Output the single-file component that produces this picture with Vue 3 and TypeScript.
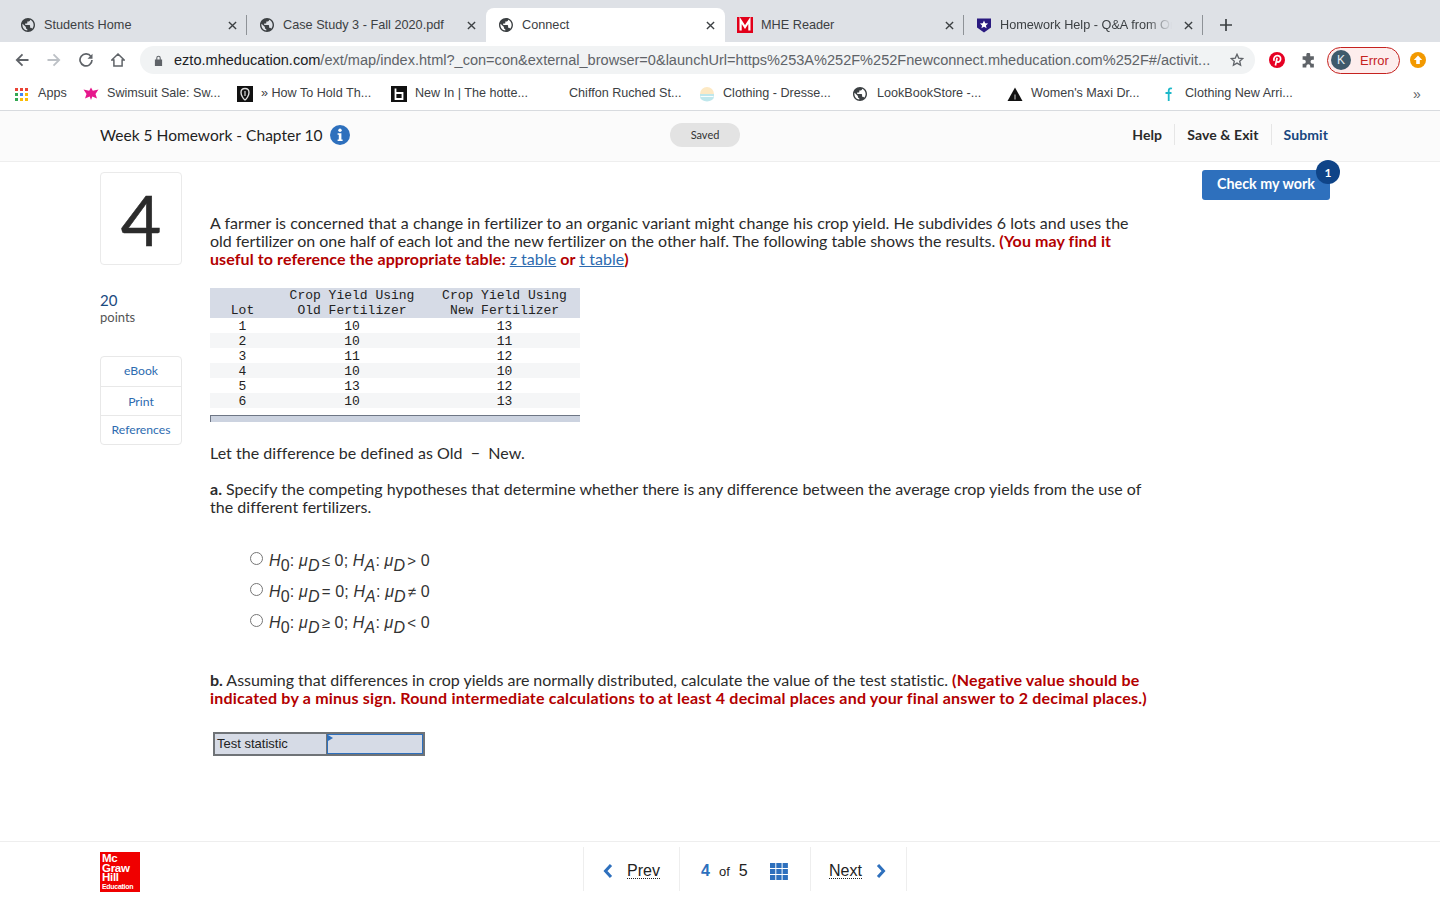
<template>
  <div class="page">
    <div class="tabstrip">
      <div v-for="tab in tabs" :key="tab.title" class="tab" :class="{ active: tab.active, nodiv: tab.nodiv }">
        <svg v-if="tab.icon === 'globe'" class="favicon" viewBox="2 2 20 20"><path fill="#3c4043" :d="globePath" /></svg>
        <svg v-else-if="tab.icon === 'mhe'" class="favicon wide" viewBox="0 0 16 16">
          <rect width="16" height="16" fill="#e2001a" />
          <path fill="none" stroke="#fff" stroke-width="2.2" d="M3.6 13.5V3.4L8 10l4.4-6.6v10.1" />
        </svg>
        <svg v-else class="favicon wide" viewBox="0 0 16 16">
          <path fill="#2a1a80" d="M1 1.5h14v9L8 15.5 1 10.500z" />
          <path fill="#fff" d="M8 3.500l1.200 2.700 2.900.3-2.200 1.900.7 2.900L8 9.800l-2.600 1.500.7-2.900-2.200-1.900 2.900-.3z" />
        </svg>
        <span class="tab-title" :class="{ fade: tab.fade }">{{ tab.title }}</span>
        <span class="tab-close">
          <svg viewBox="0 0 10 10"><path d="M1 1l8 8M9 1l-8 8" stroke="#3c4043" stroke-width="1.500" fill="none" /></svg>
        </span>
      </div>
      <div class="newtab">
        <svg viewBox="0 0 12 12"><path d="M6 0v12M0 6h12" stroke="#3c4043" stroke-width="1.700" fill="none" /></svg>
      </div>
    </div>

    <div class="toolbar">
      <div class="nav-icons">
        <svg viewBox="0 0 14 14"><path d="M13.500 7H2M7.500 1.300L1.800 7l5.700 5.700" stroke="#5f6368" stroke-width="1.800" fill="none" /></svg>
        <svg viewBox="0 0 14 14"><path d="M.5 7H12M6.500 1.300L12.200 7l-5.700 5.700" stroke="#bdc1c6" stroke-width="1.800" fill="none" /></svg>
        <svg viewBox="0 0 14 14"><path d="M12 3.600A6 6 0 1 0 13 7" stroke="#5f6368" stroke-width="1.700" fill="none" /><path d="M13.500 0.800v5h-5z" fill="#5f6368" /></svg>
        <svg viewBox="0 0 14 14"><path d="M7 1L.8 7h2.100v6h8.200V7h2.100z" stroke="#5f6368" stroke-width="1.500" fill="none" stroke-linejoin="miter" /></svg>
      </div>
      <div class="omnibox">
        <svg class="lock" viewBox="0 0 10 12"><path fill="#5f6368" d="M1 5h8v7H1zM2.500 5V3.200a2.500 2.500 0 0 1 5 0V5H6.300V3.200a1.300 1.300 0 0 0-2.600 0V5z" /></svg>
        <span class="url"><span class="host">ezto.mheducation.com</span>/ext/map/index.html?_con=con&amp;external_browser=0&amp;launchUrl=https%253A%252F%252Fnewconnect.mheducation.com%252F#/activit...</span>
        <svg class="star" viewBox="0 0 14 14"><path d="M7 1.300l1.700 3.800 4.100.4-3.100 2.700.9 4L7 10.100l-3.600 2.100.9-4-3.100-2.700 4.100-.4z" fill="none" stroke="#5f6368" stroke-width="1.300" /></svg>
      </div>
      <svg class="pin" viewBox="0 0 16 16">
        <circle cx="8" cy="8" r="8" fill="#e60023" />
        <path fill="none" stroke="#fff" stroke-width="1.700" d="M5.200 8.800C4 6 6 3.700 8.300 3.700c2.200 0 3.500 1.500 3.300 3.400-.2 2-1.500 3.200-2.800 3-.9-.1-1.300-.8-1.200-1.400M8.100 5.800L6.400 13.500" />
      </svg>
      <svg class="puzzle" viewBox="0 0 14 14"><path fill="#5f6368" d="M5 1.500a1.800 1.800 0 0 1 3.600 0V3H12v3.400h-1.300a1.800 1.800 0 0 0 0 3.600H12v3.500H8.600v-1.300a1.800 1.800 0 0 0-3.600 0v1.300H1.500V10h1.200a1.800 1.800 0 0 0 0-3.600H1.500V3H5z" /></svg>
      <div class="profile">
        <span class="avatar">K</span>
        <span class="profile-text">Error</span>
      </div>
      <svg class="update" viewBox="0 0 16 16">
        <circle cx="8" cy="8" r="8" fill="#f29900" />
        <path fill="#fff" d="M8 3.500L12.200 8H9.800v4H6.200V8H3.800z" />
      </svg>
    </div>

    <div class="bookmarks">
      <div class="apps">
        <svg viewBox="0 0 13 13">
          <template v-for="(c, i) in appDots" :key="i">
            <rect :x="(i % 3) * 5" :y="Math.floor(i / 3) * 5" width="3" height="3" :fill="c" />
          </template>
        </svg>
        <span class="bm-title">Apps</span>
      </div>
      <div v-for="b in bookmarks" :key="b.title" class="bookmark">
        <span class="bm-icon">
          <svg v-if="b.icon === 'flower'" viewBox="0 0 16 16"><path fill="#e6178c" d="M8 1.500l1.800 3.300L15.500 3.500l-3 4.400L14 12.500 9.300 10.500 8 14 6.700 10.500 2 12.500l1.500-4.600-3-4.400 5.700 1.300z" /></svg>
          <svg v-else-if="b.icon === 'shield'" viewBox="0 0 16 16"><rect width="16" height="16" fill="#111" /><path d="M8 2.500c3 0 4 2 4 4 0 3-2.500 6.500-4 7.500-1.500-1-4-4.500-4-7.500 0-2 1-4 4-4z" fill="none" stroke="#ddd" stroke-width="1.400" /><path d="M8 5v5" stroke="#ddd" stroke-width="1.200" /></svg>
          <svg v-else-if="b.icon === 'b'" viewBox="0 0 16 16"><rect width="16" height="16" fill="#111" /><path d="M4.500 2.500v10.500h7V7h-7" fill="none" stroke="#fff" stroke-width="1.800" /></svg>
          <svg v-else-if="b.icon === 'sun'" viewBox="0 0 16 16"><circle cx="8" cy="8" r="7" fill="#fde9c4" /><path d="M1 8h14v2.500a7 5 0 0 1-14 0z" fill="#bfe7ec" /><path d="M1.500 10.500h13" stroke="#fff" stroke-width=".9" /></svg>
          <svg v-else-if="b.icon === 'globe'" viewBox="2 2 20 20" class="small-globe"><path fill="#3c4043" :d="globePath" /></svg>
          <svg v-else-if="b.icon === 'tri'" viewBox="0 0 16 16"><path fill="#111" d="M8 1.500l7.500 13.500H.5z" /><path fill="#888" d="M7.200 8.500h1.600v5H7.200z" /></svg>
          <svg v-else-if="b.icon === 'f'" viewBox="0 0 16 16"><path d="M11 2.500C8.500 1.800 7.700 3 7.700 5v10M4.500 7h6" fill="none" stroke="#1cb8c9" stroke-width="1.800" /></svg>
        </span>
        <span class="bm-title">{{ b.title }}</span>
      </div>
      <span class="more">»</span>
    </div>

    <header class="hw-header">
      <div class="hw-title">
        <span>Week 5 Homework - Chapter 10</span>
        <svg class="info" viewBox="0 0 20 20">
          <circle cx="10" cy="10" r="10" fill="#2e70bd" />
          <circle cx="10" cy="5.200" r="1.700" fill="#fff" />
          <path fill="#fff" d="M7.600 8.200h3.800v6.400h1.200v1.500H7.600v-1.500h1.200V9.700H7.600z" />
        </svg>
      </div>
      <span class="saved">Saved</span>
      <nav class="hw-links">
        <a>Help</a>
        <a>Save &amp; Exit</a>
        <a class="submit">Submit</a>
      </nav>
    </header>

    <main class="hw-main">
      <aside class="side">
        <div class="qnum">4</div>
        <div class="points"><b>20</b><span>points</span></div>
        <div class="side-btns">
          <a>eBook</a>
          <a>Print</a>
          <a>References</a>
        </div>
      </aside>

      <section class="question">
        <p class="intro">
          A farmer is concerned that a change in fertilizer to an organic variant might change his crop yield. He subdivides 6 lots and uses the
          <span class="tight">old fertilizer on one half of each lot and the new fertilizer on the other half. The following table shows the results.</span> <strong class="red">(You may find it<br />useful to reference the appropriate table: <a class="link">z table</a> or <a class="link">t table</a>)</strong>
        </p>

        <table class="data">
          <colgroup>
            <col class="c1" />
            <col class="c2" />
            <col class="c3" />
          </colgroup>
          <thead>
            <tr>
              <th>Lot</th>
              <th>Crop Yield Using<br />Old Fertilizer</th>
              <th>Crop Yield Using<br />New Fertilizer</th>
            </tr>
          </thead>
          <tbody>
            <tr v-for="r in rows" :key="r[0]">
              <td v-for="(v, i) in r" :key="i">{{ v }}</td>
            </tr>
          </tbody>
        </table>
        <div class="table-foot"></div>

        <p class="diff">Let the difference be defined as Old &nbsp;&minus;&nbsp; New.</p>

        <p class="part-a"><b>a.</b> Specify the competing hypotheses that determine whether there is any difference between the average crop yields from the use of the different fertilizers.</p>

        <div class="options">
          <label v-for="o in options" :key="o.a" class="option">
            <input type="radio" name="hyp" />
            <span class="math">
              <i>H</i><sub>0</sub>: <i class="mu">μ</i><sub><i>D</i></sub><small>{{ o.a }}</small> 0; <i>H</i><sub><i>A</i></sub>: <i class="mu">μ</i><sub><i>D</i></sub><small>{{ o.b }}</small> 0
            </span>
          </label>
        </div>

        <p class="part-b"><b>b.</b> Assuming that differences in crop yields are normally distributed, calculate the value of the test statistic. <strong class="red">(Negative value should be indicated by a minus sign. Round intermediate calculations to at least 4 decimal places and your final answer to 2 decimal places.)</strong></p>

        <div class="stat">
          <div class="stat-label">Test statistic</div>
          <div class="stat-input"><span class="corner"></span></div>
        </div>
      </section>

      <div class="check-col">
        <button class="check">Check my work<span class="badge">1</span></button>
      </div>
    </main>

    <footer class="hw-footer">
      <div class="logo"><span>Mc</span><span>Graw</span><span>Hill</span><em>Education</em></div>
      <div class="pager">
        <div class="pg prev">
          <svg class="chev" viewBox="0 0 10 16"><path d="M8 2L2.500 8 8 14" fill="none" stroke="#2e70bd" stroke-width="3" /></svg>
          <span class="pg-link">Prev</span>
        </div>
        <div class="pg count">
          <b>4</b><span class="of">of</span><span class="total">5</span>
          <svg class="grid-ic" viewBox="0 0 18 17">
            <template v-for="n in 9" :key="n">
              <rect :x="((n - 1) % 3) * 6.300" :y="Math.floor((n - 1) / 3) * 6" width="5.300" height="5" fill="#2e70bd" />
            </template>
          </svg>
        </div>
        <div class="pg next">
          <span class="pg-link">Next</span>
          <svg class="chev" viewBox="0 0 10 16"><path d="M2 2l5.500 6L2 14" fill="none" stroke="#2e70bd" stroke-width="3" /></svg>
        </div>
      </div>
    </footer>
  </div>
</template>

<script setup lang="ts">
interface Tab {
  title: string;
  icon: 'globe' | 'mhe' | 'hw';
  active?: boolean;
  nodiv?: boolean;
  fade?: boolean;
}

const globePath =
  'M12 2C6.480 2 2 6.480 2 12s4.480 10 10 10 10-4.480 10-10S17.520 2 12 2zm-1 17.930c-3.950-.490-7-3.850-7-7.930 0-.620.080-1.210.210-1.790L9 15v1c0 1.100.900 2 2 2v1.930zm6.900-2.540c-.260-.810-1-1.390-1.900-1.390h-1v-3c0-.550-.450-1-1-1H8v-2h2c.550 0 1-.450 1-1V7h2c1.100 0 2-.900 2-2v-.410c2.930 1.190 5 4.060 5 7.410 0 2.080-.800 3.970-2.100 5.390z';

const tabs: Tab[] = [
  { title: 'Students Home', icon: 'globe' },
  { title: 'Case Study 3 - Fall 2020.pdf', icon: 'globe', nodiv: true },
  { title: 'Connect', icon: 'globe', active: true, nodiv: true },
  { title: 'MHE Reader', icon: 'mhe' },
  { title: 'Homework Help - Q&A from Online Tutors', icon: 'hw', fade: true },
];

const appDots = ['#ea4335', '#ea4335', '#ea4335', '#34a853', '#4285f4', '#fbbc05', '#34a853', '#fbbc05', '#fbbc05'];

const bookmarks = [
  { title: 'Swimsuit Sale: Sw...', icon: 'flower' },
  { title: '» How To Hold Th...', icon: 'shield' },
  { title: 'New In | The hotte...', icon: 'b' },
  { title: 'Chiffon Ruched St...', icon: 'none' },
  { title: 'Clothing - Dresse...', icon: 'sun' },
  { title: 'LookBookStore -...', icon: 'globe' },
  { title: "Women's Maxi Dr...", icon: 'tri' },
  { title: 'Clothing New Arri...', icon: 'f' },
];

const rows = [
  ['1', '10', '13'],
  ['2', '10', '11'],
  ['3', '11', '12'],
  ['4', '10', '10'],
  ['5', '13', '12'],
  ['6', '10', '13'],
];

const options = [
  { a: '≤', b: '>' },
  { a: '=', b: '≠' },
  { a: '≥', b: '<' },
];
</script>

<style>
html,
body {
  margin: 0;
  background: #fff;
}
</style>

<style scoped>
.page {
  width: 1440px;
  height: 900px;
  overflow: hidden;
  display: flex;
  flex-direction: column;
  font-family: Lato, "Open Sans", sans-serif;
  color: #222;
}

/* browser chrome */
.tabstrip {
  height: 42px;
  flex: none;
  display: flex;
  padding: 8px 0 0 8px;
  box-sizing: border-box;
  background: #dee1e6;
  font: 12.700px "Liberation Sans", Arial, sans-serif;
  color: #3c4043;
}
.tab {
  width: 239px;
  height: 34px;
  flex: none;
  display: flex;
  align-items: center;
  box-sizing: border-box;
  padding: 0 8.500px 0 13px;
  position: relative;
}
.tab::after {
  content: '';
  position: absolute;
  right: 0;
  top: 7px;
  width: 1px;
  height: 20px;
  background: #8e9297;
}
.tab.nodiv::after {
  display: none;
}
.tab.active {
  background: #fff;
  border-radius: 8px 8px 0 0;
}
.favicon {
  width: 14px;
  height: 14px;
  flex: none;
  margin-right: 9px;
}
.favicon.wide {
  width: 16px;
  height: 16px;
  margin: 0 8px 0 -1px;
}
.tab-title {
  flex: 1;
  min-width: 0;
  white-space: nowrap;
  overflow: hidden;
}
.tab-title.fade {
  -webkit-mask-image: linear-gradient(to right, #000 85%, transparent);
  mask-image: linear-gradient(to right, #000 85%, transparent);
}
.tab-close {
  width: 9px;
  height: 9px;
  margin: 0 2px 0 12px;
  flex: none;
  display: flex;
}
.newtab {
  width: 12px;
  height: 12px;
  margin: 11px 0 0 17px;
  display: flex;
}

.toolbar {
  height: 36px;
  flex: none;
  display: flex;
  align-items: center;
  padding: 0 14px 0 15px;
  background: #fff;
}
.nav-icons {
  display: flex;
  gap: 18px;
  width: 125px;
  flex: none;
}
.nav-icons svg {
  width: 14px;
  height: 14px;
  flex: none;
}
.omnibox {
  width: 1115px;
  height: 28px;
  flex: none;
  display: flex;
  align-items: center;
  box-sizing: border-box;
  padding: 0 11px 0 14px;
  border-radius: 14px;
  background: #f1f3f4;
  font: 14.560px "Liberation Sans", Arial, sans-serif;
  color: #5f6368;
}
.lock {
  width: 9px;
  height: 11px;
  flex: none;
  margin-right: 11px;
}
.url {
  flex: 1;
  white-space: nowrap;
  overflow: hidden;
}
.host {
  color: #202124;
}
.star {
  width: 14px;
  height: 14px;
  flex: none;
}
.pin {
  width: 16px;
  height: 16px;
  margin-left: 14px;
  flex: none;
}
.puzzle {
  width: 15px;
  height: 15px;
  margin-left: 16px;
  flex: none;
}
.profile {
  width: 73px;
  height: 27px;
  margin-left: 11px;
  flex: none;
  display: flex;
  align-items: center;
  box-sizing: border-box;
  padding-left: 3px;
  border: 1px solid #c5221f;
  border-radius: 14px;
  background: #fdeded;
  font: 13px "Liberation Sans", Arial, sans-serif;
  color: #c5221f;
}
.avatar {
  width: 20px;
  height: 20px;
  border-radius: 50%;
  background: #3f5a6b;
  color: #e8eef2;
  font-size: 12px;
  display: flex;
  align-items: center;
  justify-content: center;
}
.profile-text {
  margin-left: 9px;
}
.update {
  width: 16px;
  height: 16px;
  margin-left: 10px;
  flex: none;
}

.bookmarks {
  height: 33px;
  flex: none;
  display: flex;
  align-items: center;
  box-sizing: border-box;
  padding: 0 15px;
  border-bottom: 1px solid #d8dbdf;
  background: #fff;
  font: 12.600px "Liberation Sans", Arial, sans-serif;
  color: #3c4043;
}
.apps {
  width: 68px;
  flex: none;
  display: flex;
  align-items: center;
  gap: 10px;
}
.apps svg {
  width: 13px;
  height: 13px;
}
.bookmark {
  width: 154px;
  flex: none;
  display: flex;
  align-items: center;
  gap: 8px;
  white-space: nowrap;
}
.bm-title {
  margin-bottom: 2px;
}
.bm-icon {
  width: 16px;
  height: 16px;
  flex: none;
  display: flex;
}
.bm-icon svg {
  width: 16px;
  height: 16px;
}
.bm-icon svg.small-globe {
  width: 14px;
  height: 14px;
  margin-top: 1px;
}
.more {
  margin-left: 98px;
  font-size: 14px;
  color: #5f6368;
}

/* homework header */
.hw-header {
  height: 51px;
  flex: none;
  display: flex;
  align-items: center;
  box-sizing: border-box;
  padding: 0 112px 3px 100px;
  border-bottom: 1px solid #eee;
  background: #fbfbfb;
}
.hw-title {
  display: flex;
  align-items: center;
  gap: 7px;
  font-size: 15.550px;
  color: #1f1f1f;
  width: 570px;
}
.info {
  width: 20px;
  height: 20px;
}
.saved {
  width: 70px;
  height: 24px;
  border-radius: 12px;
  background: #e3e3e3;
  font-size: 11px;
  display: flex;
  align-items: center;
  justify-content: center;
  color: #333;
}
.hw-links {
  margin-left: auto;
  display: flex;
  align-items: center;
  font-size: 14px;
  font-weight: 700;
  letter-spacing: .1px;
  color: #2a2a2a;
}
.hw-links a {
  padding: 2px 12px;
  border-left: 1px solid #e6e6e6;
}
.hw-links a:first-child {
  border-left: 0;
}
.hw-links .submit {
  color: #17467e;
  padding-right: 0;
}

/* body */
.hw-main {
  flex: 1;
  display: flex;
  padding-left: 100px;
  min-height: 0;
}
.side {
  width: 82px;
  flex: none;
  padding-top: 10px;
  margin-right: 28px;
}
.qnum {
  height: 93px;
  box-sizing: border-box;
  border: 1px solid #eaeaea;
  border-radius: 4px;
  display: flex;
  align-items: center;
  justify-content: center;
  font-size: 70px;
  line-height: 1;
  color: #2b2b2b;
  -webkit-text-stroke: .5px #2b2b2b;
}
.points {
  margin-top: 27px;
  display: flex;
  flex-direction: column;
  font-size: 13px;
  color: #555;
}
.points b {
  font-size: 15px;
  font-weight: 400;
  color: #1b4a80;
  line-height: 17px;
}
.side-btns {
  margin-top: 31px;
  display: flex;
  flex-direction: column;
  border: 1px solid #e8e8e8;
  border-radius: 4px;
  font-size: 12.200px;
  color: #2d6bb0;
  text-align: center;
}
.side-btns a {
  height: 28px;
  line-height: 28px;
  border-top: 1px solid #e8e8e8;
}
.side-btns a:first-child {
  height: 29px;
  line-height: 28px;
  border-top: 0;
}
.side-btns a:nth-child(2) {
  line-height: 30px;
}

.question {
  width: 941px;
  margin-right: 9px;
  flex: none;
  padding-top: 52px;
  font-size: 16px;
  letter-spacing: .035px;
  line-height: 18px;
  color: #2b2b2b;
}
.question p {
  margin: 0;
}
.tight {
  letter-spacing: -.035px;
}
.red {
  color: #b30000;
  font-weight: 700;
  letter-spacing: .2px;
}
.intro .red {
  letter-spacing: .1px;
}
.link,
.intro .link {
  color: #2d6bb0;
  font-weight: 400;
  letter-spacing: .05px;
  text-decoration: underline;
}
table.data {
  width: 370px;
  margin-top: 20px;
  border-collapse: collapse;
  table-layout: fixed;
  font: 13px/13px "Liberation Mono", "Courier New", monospace;
  letter-spacing: 0;
  color: #222;
}
.c1 {
  width: 65px;
}
.c2 {
  width: 154px;
}
.data th {
  background: #d6dbe6;
  font-weight: 400;
  line-height: 14.500px;
  vertical-align: bottom;
  padding: 1px 0 0;
}
.data td {
  padding: 2px 0 0;
  text-align: center;
}
.data tbody tr:nth-child(even) td {
  background: #f5f6f7;
}
.table-foot {
  height: 6px;
  margin-top: 7px;
  background: #ccd3e0;
  border-top: 1px solid #6e7685;
  border-left: 1px solid #6e7685;
  box-sizing: content-box;
  width: 369px;
}
.diff {
  margin-top: 22px !important;
}
.part-a {
  margin-top: 18px !important;
  letter-spacing: .02px;
}
.options {
  margin-top: 30px;
  display: flex;
  flex-direction: column;
  gap: 0;
  padding-left: 40px;
}
.option {
  height: 31px;
  display: flex;
  align-items: center;
}
.option input {
  width: 13px;
  height: 13px;
  margin: 0 6px 6px 0;
}
.math {
  font: 16px/20px "Liberation Sans", Arial, sans-serif;
  letter-spacing: .15px;
  color: #333;
  white-space: nowrap;
  margin-bottom: 2px;
}
.math sub {
  font-size: 16px;
  line-height: 0;
  vertical-align: -5px;
}
.math small {
  font-size: 15px;
  margin-left: 2px;
}
.part-b {
  margin-top: 32px !important;
  letter-spacing: -.03px;
}
.stat {
  display: flex;
  width: 212px;
  height: 24px;
  margin: 25px 0 0 3px;
  box-sizing: border-box;
  border: 2px solid #6f7377;
  font: 13px "Liberation Sans", Arial, sans-serif;
  letter-spacing: 0;
  color: #222;
  background: #d6dbe6;
}
.stat-label {
  width: 112px;
  box-sizing: border-box;
  padding-left: 2px;
  line-height: 20px;
  border-right: 1px solid #6f7377;
}
.stat-input {
  flex: 1;
  border: 1px solid #2e70bd;
  position: relative;
}
.corner {
  position: absolute;
  left: 0;
  top: 0;
  border-left: 5px solid #2e70bd;
  border-top: 3px solid transparent;
  border-bottom: 3px solid transparent;
}
.check-col {
  padding-top: 8px;
  margin-left: 42px;
}
.check {
  position: relative;
  width: 128px;
  height: 30px;
  border: 0;
  border-radius: 3px;
  background: #2e70bd;
  color: #fff;
  font: 700 14.300px Lato, sans-serif;
  padding: 0 0 3px;
}
.badge {
  position: absolute;
  right: -10px;
  top: -10px;
  width: 24px;
  height: 24px;
  border-radius: 50%;
  background: #0f4488;
  font-size: 12px;
  display: flex;
  align-items: center;
  justify-content: center;
}

/* footer */
.hw-footer {
  height: 59px;
  flex: none;
  display: flex;
  align-items: flex-start;
  box-sizing: border-box;
  padding: 5px 0 0 100px;
  border-top: 1px solid #eee;
}
.logo {
  width: 40px;
  height: 40px;
  margin-top: 5px;
  box-sizing: border-box;
  padding: 2px 0 0 2px;
  background: #f00000;
  color: #fff;
  display: flex;
  flex-direction: column;
  font: 700 11.500px/9.500px "Liberation Sans", Arial, sans-serif;
  letter-spacing: -.3px;
}
.logo em {
  font-style: normal;
  font-size: 7px;
  line-height: 8px;
}
.pager {
  display: flex;
  height: 44px;
  margin-left: 443px;
  border-right: 1px solid #eee;
  font-family: "Liberation Sans", Arial, sans-serif;
  font-size: 16px;
  color: #222;
}
.pg {
  display: flex;
  align-items: center;
  border-left: 1px solid #eee;
  box-sizing: border-box;
  padding-top: 4px;
}
.prev {
  width: 96px;
  padding-left: 19px;
  gap: 14px;
}
.count {
  width: 131px;
  padding-left: 21px;
}
.next {
  width: 96px;
  padding-left: 18px;
  gap: 14px;
}
.pg-link {
  border-bottom: 1px dotted #222;
  line-height: 15px;
}
.chev {
  width: 10px;
  height: 16px;
  flex: none;
}
.count b {
  color: #2e70bd;
}
.of {
  margin: 0 9px;
  font-size: 13px;
}
.grid-ic {
  width: 18px;
  height: 17px;
  margin-left: 22px;
}
</style>
